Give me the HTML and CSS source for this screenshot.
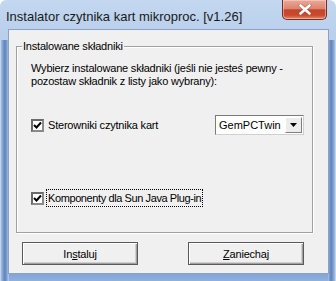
FILE: index.html
```html
<!DOCTYPE html>
<html lang="pl">
<head>
<meta charset="utf-8">
<link rel="stylesheet" href="styles.css">
</head>
<body>
<div class="window">
  <div class="titlebar">
    <span class="title">Instalator czytnika kart mikroproc. [v1.26]</span>
    <div class="close">
      <svg width="14" height="11" viewBox="0 0 14 11"><path d="M2.5 1.5 L11.5 9.5 M11.5 1.5 L2.5 9.5" stroke="#7a3024" stroke-width="4" stroke-linecap="round" opacity="0.35"/><path d="M2.5 1.5 L11.5 9.5 M11.5 1.5 L2.5 9.5" stroke="#fff" stroke-width="2.6" stroke-linecap="round"/></svg>
    </div>
  </div>
  <div class="client">
    <div class="group">
      <div class="legend">Instalowane składniki</div>
      <p class="info">Wybierz instalowane składniki (jeśli nie jesteś pewny -<br>pozostaw składnik z listy jako wybrany):</p>
      <div class="row">
        <label class="check">
          <span class="box"><svg width="9" height="9" viewBox="0 0 9 9"><path d="M1 4 L3.5 6.5 L8 1.5" fill="none" stroke="#000" stroke-width="2"/></svg></span>
          <span class="label">Sterowniki czytnika kart</span>
        </label>
        <div class="combo">
          <span class="combo-text">GemPCTwin</span>
          <span class="combo-btn"><svg width="7" height="4" viewBox="0 0 7 4"><path d="M0 0 H7 L3.5 4 Z" fill="#000"/></svg></span>
        </div>
      </div>
      <div class="row row2">
        <label class="check">
          <span class="box"><svg width="9" height="9" viewBox="0 0 9 9"><path d="M1 4 L3.5 6.5 L8 1.5" fill="none" stroke="#000" stroke-width="2"/></svg></span>
          <span class="label focus">Komponenty dla Sun Java Plug-in</span>
        </label>
      </div>
    </div>
    <div class="buttons">
      <button class="btn">In<u>s</u>taluj</button>
      <button class="btn"><u>Z</u>aniechaj</button>
    </div>
  </div>
</div>
</body>
</html>
```
FILE: styles.css
```css
* { box-sizing: border-box; }
html, body { margin: 0; padding: 0; background: #fff; }

.window {
  width: 336px;
  height: 281px;
  display: flex;
  flex-direction: column;
  padding: 0 8px 8px 9px;
  border-radius: 6px 7px 0 0;
  background:
    linear-gradient(to right, #dbe7f5 0, #a9c1e2 1px, #7b9bcc 3px, #5e82bc 5px, #86a5d3 7px, #b6cbe8 9px) left 40px / 9px 100% no-repeat,
    linear-gradient(to left, #dbe7f5 0, #a9c1e2 1px, #7b9bcc 3px, #5e82bc 5px, #86a5d3 7px, #b6cbe8 8px) right 40px / 8px 100% no-repeat,
    linear-gradient(#c3d7ef 0, #bad0ec 30px, #a6c1e4 200px, #7c9fd0 270px, #8fb0dc 281px);
  font-family: "Liberation Sans", Arial, sans-serif;
}

.titlebar {
  height: 30px;
  display: flex;
  align-items: flex-start;
  justify-content: space-between;
  margin-left: -3px;
}
.title {
  font-size: 13px;
  line-height: 15px;
  padding-top: 9px;
  color: #1a1a1a;
}
.close {
  width: 45px;
  height: 20px;
  margin-right: 1px;
  border: 1px solid #7a2a20;
  border-top: none;
  border-radius: 0 0 5px 5px;
  background: linear-gradient(#eaa999 0, #dc8470 45%, #c5452c 52%, #c94a2e 80%, #e28a70 100%);
  box-shadow: inset 0 0 0 1px rgba(255,220,210,.5);
  display: flex;
  align-items: center;
  justify-content: center;
}

.client {
  flex: 1;
  background: #f0f0f0;
  box-shadow: 0 0 0 1px #8aa2c4;
  display: flex;
  flex-direction: column;
  font-size: 11px;
  letter-spacing: -0.2px;
  color: #000;
}

.group {
  margin: 16px 15px 0 7px;
  height: 187px;
  border: 1px solid #a0a0a0;
  box-shadow: 1px 1px 0 #fff, inset 1px 1px 0 #fff;
  padding: 0 14px;
}
.legend {
  margin: -8px 0 0 -9px;
  width: fit-content;
  padding: 0 1px;
  background: #f0f0f0;
  line-height: 14px;
}
.info {
  margin: 9px 0 0 0;
  line-height: 13px;
}

.row {
  display: flex;
  align-items: center;
  justify-content: space-between;
  margin-top: 27px;
  margin-right: -6px;
}
.row2 { margin-top: 55px; }

.check {
  display: flex;
  align-items: center;
  gap: 3px;
  line-height: 14px;
}
.box {
  width: 13px;
  height: 13px;
  border: 2px solid #707070;
  border-color: #6a6a6a #8a8a8a #8a8a8a #6a6a6a;
  background: #fff;
  display: flex;
  align-items: center;
  justify-content: center;
}
.label { padding: 1px 1px; }
.focus { outline: 1px dotted #000; outline-offset: 0; letter-spacing: -0.4px; }

.combo {
  width: 89px;
  height: 20px;
  border: 1px solid #7a7a7a;
  border-color: #7a7a7a #d0d0d0 #d0d0d0 #7a7a7a;
  background: #fff;
  display: flex;
  align-items: center;
  justify-content: space-between;
  padding: 0 1px 0 3px;
  font-size: 11px;
  letter-spacing: 0;
}
.combo-btn {
  width: 17px;
  height: 16px;
  background: #ececec;
  border: 1px solid;
  border-color: #fff #808080 #808080 #fff;
  display: flex;
  align-items: center;
  justify-content: center;
}

.buttons {
  display: flex;
  gap: 50px;
  padding-left: 13px;
  margin-top: 9px;
}
.btn {
  width: 116px;
  height: 23px;
  font: inherit;
  font-size: 11px;
  letter-spacing: -0.2px;
  background: #f0f0f0;
  border: 1px solid #5a5a5a;
  box-shadow: inset 1px 1px 0 #fff, inset -1px -1px 0 #a0a0a0, inset -2px -2px 0 #d0d0d0;
  color: #000;
  padding: 0;
}
.btn u { text-decoration-thickness: 1px; }
```
